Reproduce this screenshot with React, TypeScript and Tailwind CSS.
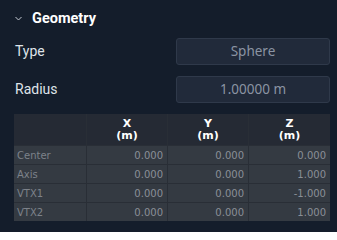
import React from 'react';

const rows = [
  { name: 'Center', x: '0.000', y: '0.000', z: '0.000' },
  { name: 'Axis', x: '0.000', y: '0.000', z: '1.000' },
  { name: 'VTX1', x: '0.000', y: '0.000', z: '-1.000' },
  { name: 'VTX2', x: '0.000', y: '0.000', z: '1.000' },
];

const Field: React.FC<{ label: string; value: string }> = ({ label, value }) => (
  <div className="flex items-center justify-between h-[27px]">
    <span className="pl-px text-[14px] text-[#dfe3e9]">{label}</span>
    <div className="w-[154px] h-[27px] flex items-center justify-center rounded-[3px] border border-[#2f394a] bg-[#212a3a] font-['Noto_Sans'] text-[13.5px] text-[#8b94a3]">
      {value}
    </div>
  </div>
);

export default function App() {
  return (
    <div className="w-[337px] h-[232px] bg-[#141d2b] pl-[14px] pr-[7px] font-['Roboto',sans-serif]">
      <div className="h-[38px] flex items-center gap-[10px] pb-px">
        <svg width="7" height="5" viewBox="0 0 7 5" className="ml-px">
          <path d="M0.5 1 L3.5 4 L6.5 1" fill="none" stroke="#c3c9d2" strokeWidth="1" />
        </svg>
        <span className="text-[14.5px] font-bold text-white">Geometry</span>
      </div>

      <div className="flex flex-col gap-[11px]">
        <Field label="Type" value="Sphere" />
        <Field label="Radius" value="1.00000 m" />
      </div>

      <div className="mt-[11px] grid grid-cols-[72px_80px_80px_81px] gap-px bg-[#292e36] font-['DejaVu_Sans',sans-serif] text-[10px]">
        <div className="h-[31px] bg-[#252a34]" />
        {['X', 'Y', 'Z'].map((c) => (
          <div key={c} className="h-[31px] bg-[#252a34] flex flex-col items-center justify-center font-bold text-[11px] text-white leading-[12px]">
            <span>{c}</span>
            <span>(m)</span>
          </div>
        ))}
        {rows.map((r) => (
          <React.Fragment key={r.name}>
            <div className="h-[18px] bg-[#343a42] flex items-center pl-[3px] text-[#7d828a]">{r.name}</div>
            <div className="h-[18px] bg-[#343a42] flex items-center justify-end pr-[4px] text-[#8a8f97]">{r.x}</div>
            <div className="h-[18px] bg-[#343a42] flex items-center justify-end pr-[4px] text-[#8a8f97]">{r.y}</div>
            <div className="h-[18px] bg-[#343a42] flex items-center justify-end pr-[4px] text-[#8a8f97]">{r.z}</div>
          </React.Fragment>
        ))}
      </div>
    </div>
  );
}
